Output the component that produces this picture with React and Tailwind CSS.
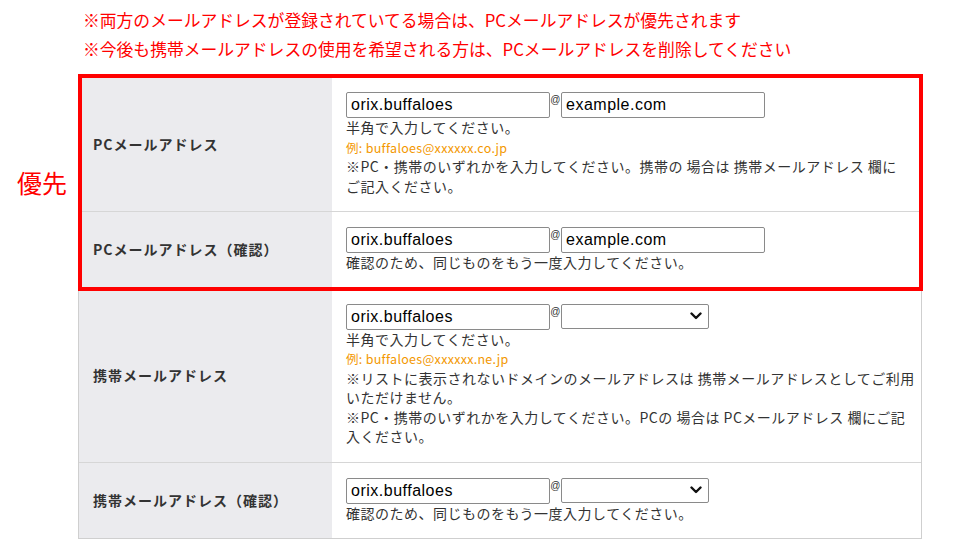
import React from "react";

function EmailInput({ value }) {
  return (
    <input
      readOnly
      defaultValue={value}
      className="w-[204px] h-[26px] border border-[#8a8a8a] rounded-[2px] bg-white px-[4px] text-[16px] text-black font-['Liberation_Sans',Arial,sans-serif] outline-none"
    />
  );
}

function DomainSelect() {
  return (
    <div className="w-[148px] h-[25px] border border-[#8a8a8a] rounded-[2px] bg-white flex items-center justify-end pr-[6px]">
      <svg width="12" height="8" viewBox="0 0 12 8" fill="none">
        <path d="M1.5 1.5 L6 6 L10.5 1.5" stroke="#111" strokeWidth="2.4" strokeLinecap="round" strokeLinejoin="round" />
      </svg>
    </div>
  );
}

function At() {
  return (
    <span className="w-[11px] text-center text-[10px] leading-none text-[#333] mt-[3px] font-['Liberation_Sans',Arial,sans-serif]">
      @
    </span>
  );
}

function EmailLine({ second }) {
  return (
    <div className="flex items-start">
      <EmailInput value="orix.buffaloes" />
      <At />
      {second === "select" ? <DomainSelect /> : <EmailInput value="example.com" />}
    </div>
  );
}

function Row({ label, children, divider }) {
  return (
    <div className={divider ? "flex border-b border-[#d6d6d6]" : "flex"}>
      <div className="w-[253px] shrink-0 bg-[#ebebee] flex items-center pl-[14px] text-[14px] font-bold tracking-[1px] text-[#333]">
        {label}
      </div>
      <div className="flex-1 bg-white pl-[14px] pt-[15px] pb-[15px] text-[14px] leading-[19.5px] tracking-[0.5px] text-[#333] whitespace-nowrap">
        {children}
      </div>
    </div>
  );
}

export default function App() {
  return (
    <div className="w-[960px] h-[540px] overflow-hidden bg-white font-['Noto_Sans_CJK_JP',sans-serif]">
      <div className="pt-[6px] pl-[83px] text-[16.8px] leading-[29px] text-[#ff0000]">
        <p>※両方のメールアドレスが登録されていてる場合は、PCメールアドレスが優先されます</p>
        <p>※今後も携帯メールアドレスの使用を希望される方は、PCメールアドレスを削除してください</p>
      </div>

      <div className="mt-[12px] flex">
        <div className="w-[78px] shrink-0 flex items-center pl-[17px] text-[25px] leading-none text-[#ff0000]">
          優先
        </div>
        <div className="relative w-[844px] border-x border-t border-[#cfcfcf] flex flex-col">
          <Row label="PCメールアドレス" divider>
            <EmailLine />
            <p>半角で入力してください。</p>
            <p className="text-[12.5px] tracking-[0.3px] text-[#f39800]">例: buffaloes@xxxxxx.co.jp</p>
            <p>※PC・携帯のいずれかを入力してください。携帯の 場合は 携帯メールアドレス 欄に</p>
            <p>ご記入ください。</p>
          </Row>
          <Row label="PCメールアドレス（確認）" divider>
            <EmailLine />
            <p>確認のため、同じものをもう一度入力してください。</p>
          </Row>
          <div className="absolute -top-[3px] -left-[1px] -right-[2px] -bottom-[2px] border-4 border-[#ff0000] pointer-events-none" />
        </div>
      </div>

      <div className="ml-[78px] w-[844px] border-x border-b border-[#cfcfcf] flex flex-col">
        <Row label="携帯メールアドレス" divider>
          <EmailLine second="select" />
          <p>半角で入力してください。</p>
          <p className="text-[12.5px] tracking-[0.3px] text-[#f39800]">例: buffaloes@xxxxxx.ne.jp</p>
          <p>※リストに表示されないドメインのメールアドレスは 携帯メールアドレスとしてご利用</p>
          <p>いただけません。</p>
          <p>※PC・携帯のいずれかを入力してください。PCの 場合は PCメールアドレス 欄にご記</p>
          <p>入ください。</p>
        </Row>
        <Row label="携帯メールアドレス（確認）">
          <EmailLine second="select" />
          <p>確認のため、同じものをもう一度入力してください。</p>
        </Row>
      </div>
    </div>
  );
}
